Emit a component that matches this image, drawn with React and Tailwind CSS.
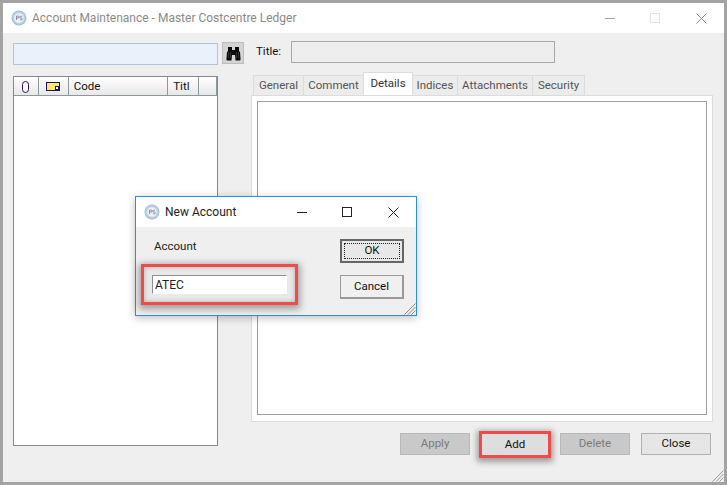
function Logo() {
  return (
    <svg width="16" height="16" viewBox="0 0 16 16" className="shrink-0">
      <defs>
        <radialGradient id="lg" cx="50%" cy="50%" r="55%">
          <stop offset="0%" stopColor="#f4f6fa" />
          <stop offset="60%" stopColor="#cfd8e8" />
          <stop offset="100%" stopColor="#7fb4cf" />
        </radialGradient>
      </defs>
      <circle cx="8" cy="8" r="7.5" fill="url(#lg)" />
      <circle cx="8" cy="8" r="4.5" fill="#eef0f5" />
      <path d="M5.5 10V6h1.6a1 1 0 0 1 0 2H5.5M11 6.3H9.6a.8.8 0 0 0 0 1.7h.8a.8.8 0 0 1 0 1.8H9" fill="none" stroke="#6a6a86" strokeWidth=".7" />
    </svg>
  );
}

function Binoculars() {
  return (
    <svg width="15" height="15" viewBox="0 0 15 15">
      <path d="M2 1h4v3h3V1h4v4l1 1 .6 7.5-.6 1H9.5L9 9H6l-.5 5.5H1l-.6-1L1 6l1-1z" fill="#0c0c0c" />
      <path d="M2.5 6.5v6M4.5 6.5v6M10.5 6.5v6M12.5 6.5v6" stroke="#777" strokeWidth=".7" strokeDasharray="1 1" />
    </svg>
  );
}

function HeaderCell({ className = "", children }) {
  return (
    <div className={"h-full flex items-center pt-[1px] bg-gradient-to-b from-[#ffffff] to-[#e8e8e8] border-r-[1px] border-r-[#8a9a9a] " + className}>
      {children}
    </div>
  );
}

function WinBtn({ className = "", children }) {
  return (
    <div className={"h-[22px] flex items-center justify-center " + className}>{children}</div>
  );
}

function Grip({ color = "#9a9a9a" }) {
  return (
    <svg width="13" height="13" viewBox="0 0 13 13" className="absolute right-0 bottom-0">
      <path d="M12.5 1.5 1.5 12.5M12.5 5 5 12.5M12.5 8.5 8.5 12.5" stroke={color} strokeWidth="1" />
    </svg>
  );
}

export default function App() {
  const tabsA = [
    ["General", "w-[51px]"],
    ["Comment", "w-[61px]"],
  ];
  const tabsB = [
    ["Indices", "w-[46px]"],
    ["Attachments", "w-[76px]"],
    ["Security", "w-[53px]"],
  ];
  const tabClass = "h-[20px] pt-[1px] bg-[#ececec] border border-[#dcdcdc] border-b-0 flex items-center justify-center -mr-px ";
  return (
    <div className="relative w-[727px] h-[485px] border-[3px] border-[#a3a3a3] bg-[#efefef] flex flex-col overflow-hidden font-['Roboto','Liberation_Sans',sans-serif] text-[11.5px] text-[#111]">
      {/* Title bar */}
      <div className="h-[30px] bg-white flex items-center pl-[8px] shrink-0">
        <Logo />
        <span className="ml-[5px] text-[12px] text-[#8a8a8a]">Account Maintenance - Master Costcentre Ledger</span>
        <div className="ml-auto flex items-center h-full">
          <svg width="11" height="11" viewBox="0 0 11 11" className="mr-[34px]"><path d="M0 5.5h10" stroke="#a0a0a0" /></svg>
          <svg width="11" height="11" viewBox="0 0 11 11" className="mr-[35px]"><rect x=".5" y=".5" width="9" height="9" fill="none" stroke="#e2e2e2" /></svg>
          <svg width="11" height="11" viewBox="0 0 11 11" className="mr-[17px]"><path d="M.5.5l10 10M10.5.5l-10 10" stroke="#8c8c8c" /></svg>
        </div>
      </div>

      {/* Body */}
      <div className="flex flex-1 pl-[10px] pr-[13px] min-h-0">
        {/* Left column */}
        <div className="w-[205px] pt-[10px] flex flex-col shrink-0">
          <div className="h-[22px] bg-[#eaf1fa] border border-[#afc3dc]" />
          <div className="mt-[11px] h-[370px] bg-white border border-[#84898f] flex flex-col">
            <div className="h-[19px] flex items-stretch border-b border-[#8a9a9a] shrink-0">
              <HeaderCell className="w-[25px] justify-center">
                <span className="block w-[7px] h-[12px] rounded-[4px] border-[1.5px] border-[#2a0f6e] bg-white" />
              </HeaderCell>
              <HeaderCell className="w-[30px] justify-center">
                <span className="relative block w-[14px] h-[9px] bg-[#ffe96a] border border-[#1a0f6e]">
                  <span className="absolute right-0 bottom-0 w-[4px] h-[4px] bg-white border border-[#1a0f6e]" />
                </span>
              </HeaderCell>
              <HeaderCell className="w-[100px] pl-[5px]">Code</HeaderCell>
              <HeaderCell className="w-[31px] pl-[5px]">Titl</HeaderCell>
              <HeaderCell className="w-[18px] border-r-0" />
            </div>
          </div>
        </div>

        {/* Binoculars */}
        <div className="pt-[9px] ml-[4px] shrink-0">
          <div className="w-[22px] h-[22px] bg-[#d4d4d4] border border-[#bdbdbd] flex items-center justify-center">
            <Binoculars />
          </div>
        </div>

        {/* Right column */}
        <div className="ml-[7px] flex-1 flex flex-col min-w-0">
          <div className="flex items-center pt-[8px] ml-[5px]">
            <span className="w-[35px]">Title:</span>
            <div className="w-[264px] h-[22px] bg-[#eeeeee] border border-[#a8a8a8]" />
          </div>

          <div className="mt-[10px] flex items-end h-[22px] ml-[2px] text-[#555]">
            {tabsA.map(([t, w]) => (
              <div key={t} className={tabClass + w}>{t}</div>
            ))}
            <div className="relative z-10 w-[50px] h-[23px] bg-white border border-[#dcdcdc] border-b-0 flex items-start pt-[2px] justify-center text-[#333] -mr-px">Details</div>
            {tabsB.map(([t, w]) => (
              <div key={t} className={tabClass + w}>{t}</div>
            ))}
          </div>
          <div className="w-[462px] h-[327px] bg-white border border-[#dcdcdc] pt-[5px] px-[5px] pb-[6px]">
            <div className="w-full h-full border border-[#a0a0a0] bg-white" />
          </div>

          <div className="mt-[11px] flex items-start gap-[10px] w-[460px] justify-end">
            <WinBtn className="w-[70px] bg-[#c9c9c9] border border-[#b8b8b8] text-[#7a7a7a]">Apply</WinBtn>
            <div className="w-[72px] h-[27px] -mx-[1px] -mt-[2px] flex items-center justify-center bg-[#dedede] border-[3px] border-[#f04a4a] shadow-[0_2px_6px_2px_rgba(0,0,0,0.35)]">Add</div>
            <WinBtn className="w-[70px] bg-[#c9c9c9] border border-[#b8b8b8] text-[#7a7a7a]">Delete</WinBtn>
            <WinBtn className="w-[70px] ml-[1px] bg-[#e6e6e6] border border-[#b0b0b0]">Close</WinBtn>
          </div>
        </div>
      </div>

      <Grip />

      {/* Dialog */}
      <div className="absolute left-[132px] top-[193px] w-[282px] h-[120px] border border-[#2b8fd8] bg-[#efefef] shadow-[0_2px_8px_rgba(0,0,0,0.25)] flex flex-col">
        <div className="h-[30px] bg-white flex items-center pl-[8px] shrink-0">
          <Logo />
          <span className="ml-[5px] text-[12px] text-[#222]">New Account</span>
          <div className="ml-auto flex items-center">
            <svg width="11" height="11" viewBox="0 0 11 11" className="mr-[34px]"><path d="M0 5.5h10" stroke="#222" /></svg>
            <svg width="11" height="11" viewBox="0 0 11 11" className="mr-[35px]"><rect x=".5" y=".5" width="9" height="9" fill="none" stroke="#222" /></svg>
            <svg width="11" height="11" viewBox="0 0 11 11" className="mr-[17px]"><path d="M.5.5l10 10M10.5.5l-10 10" stroke="#222" /></svg>
          </div>
        </div>
        <div className="relative flex-1 flex justify-between pl-[18px] pr-[12px]">
          <div className="flex flex-col">
            <span className="mt-[11px] h-[16px] text-[#222]">Account</span>
            <div className="mt-[10px] -ml-[13px] w-[157px] h-[41px] p-[8px] border-[3px] border-[#f04a4a] bg-[#e9e9e9] shadow-[0_2px_7px_2px_rgba(0,0,0,0.35),inset_0_0_5px_rgba(0,0,0,0.25)]">
              <div className="w-[135px] h-[19px] bg-white border border-[#909090] border-b-white border-r-white flex items-center pl-[2px] text-[12px] text-[#222]">ATEC</div>
            </div>
          </div>
          <div className="flex flex-col pt-[12px]">
            <div className="w-[64px] h-[24px] border-2 border-[#666] bg-[#e8e8e8] p-[2px] flex items-center justify-center">
              <span className="w-full h-full border border-dotted border-[#222] flex items-center justify-center">OK</span>
            </div>
            <div className="mt-[12px] w-[64px] h-[24px] bg-[#f0f0f0] border border-[#999] border-b-[2px] border-r-[2px] flex items-center justify-center">Cancel</div>
          </div>
          <Grip color="#888" />
        </div>
      </div>
    </div>
  );
}
